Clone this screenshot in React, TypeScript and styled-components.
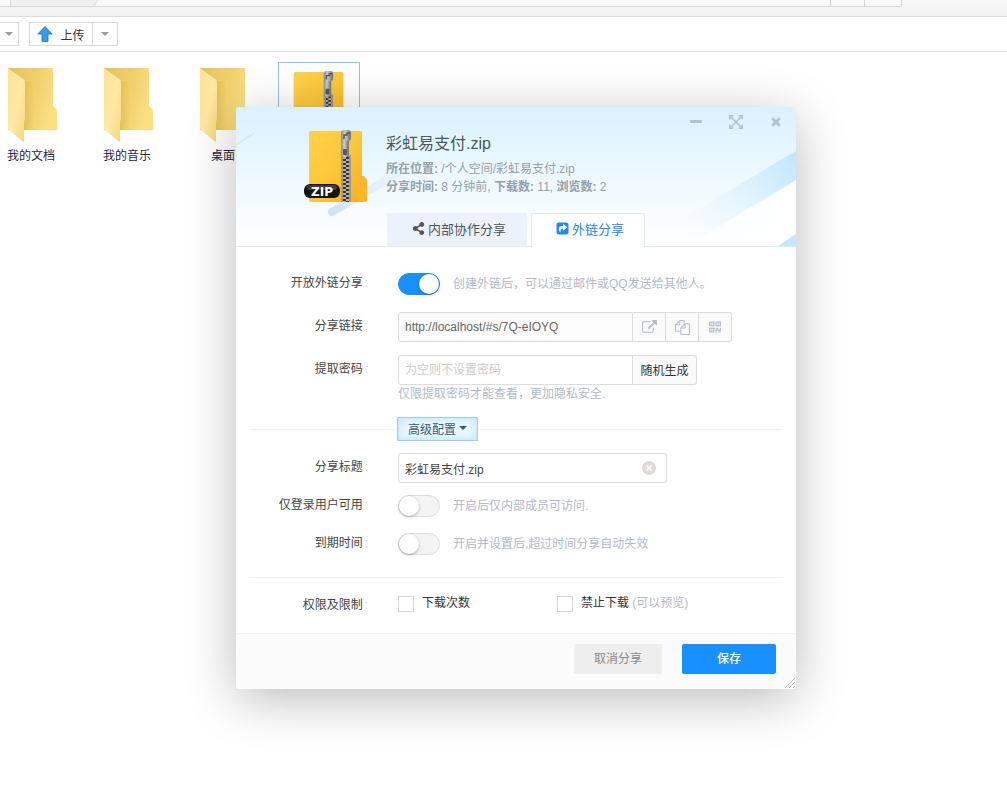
import React from "react";
import styled, { createGlobalStyle, css } from "styled-components";
import { FaShareAlt } from "react-icons/fa";

const GlobalStyle = createGlobalStyle`
  * { box-sizing: border-box; }
  html, body { margin: 0; padding: 0; }
  body {
    background: #fff;
    overflow: hidden;
    font-family: "Liberation Sans", "Noto Sans CJK SC", sans-serif;
    font-size: 12px;
    color: #444;
  }
  button, input { font: inherit; margin: 0; }
`;

/* ---------- file manager behind the dialog ---------- */

const Page = styled.div`
  position: relative;
  min-height: 100vh;
  overflow: hidden;
`;

const AddressBar = styled.header`
  display: flex;
  align-items: flex-start;
  height: 17px;
  background: linear-gradient(#f9f9f9, #f1f1f1);
  border-bottom: 1px solid #dcdcdc;
`;

const AddressPath = styled.div`
  width: 831px;
  height: 7px;
  border-right: 1px solid #d4d4d4;
  border-bottom: 1px solid #d8d8d8;
  background: #fafafa;
  svg { display: block; }
`;

const AddressCell = styled.div<{ $w: number }>`
  width: ${(p) => p.$w}px;
  height: 7px;
  border-right: 1px solid #d4d4d4;
  border-bottom: 1px solid #d8d8d8;
  background: #fafafa;
`;

const Toolbar = styled.nav`
  display: flex;
  align-items: center;
  gap: 10px;
  height: 35px;
  border-bottom: 1px solid #e2e2e2;
`;

const ToolGroup = styled.div<{ $cut?: boolean }>`
  display: flex;
  height: 24px;
  border: 1px solid #d9d9d9;
  ${(p) => p.$cut && css`border-left: 0;`}
`;

const ToolButton = styled.button<{ $w: number }>`
  display: flex;
  align-items: center;
  justify-content: center;
  gap: 7px;
  width: ${(p) => p.$w}px;
  padding: 0;
  border: 0;
  background: #fff;
  color: #333;
  & + & { border-left: 1px solid #d9d9d9; }
`;

const Files = styled.main`
  display: flex;
  gap: 14px;
  margin: 10px 0 0 -10px;
`;

const FileItem = styled.figure<{ $selected?: boolean }>`
  display: flex;
  flex-direction: column;
  align-items: center;
  width: 82px;
  height: 106px;
  margin: 0;
  padding-top: ${(p) => (p.$selected ? 7 : 4)}px;
  border: 1px solid ${(p) => (p.$selected ? "#8fc3e4" : "transparent")};
`;

const FileName = styled.figcaption`
  line-height: 22px;
  color: #1f2440;
`;

/* ---------- dialog ---------- */

const Dialog = styled.section`
  position: absolute;
  top: 107px;
  left: 236px;
  width: 560px;
  background: #fff;
  border-radius: 3px;
  box-shadow: 0 10px 50px rgba(0, 0, 0, 0.27);
`;

const Head = styled.header`
  position: relative;
  padding: 22px 0 0 68px;
  height: 140px;
  border-bottom: 1px solid #dfeaf2;
  border-radius: 3px 3px 0 0;
  background: linear-gradient(#daf1fe, #f3fbff 66%, #fff);
`;

const HeadDecor = styled.svg`
  position: absolute;
  inset: 0;
  width: 100%;
  height: 100%;
`;

const WindowButtons = styled.div`
  position: absolute;
  top: 6px;
  right: 10px;
  display: flex;
  gap: 20px;
`;

const WindowButton = styled.button`
  display: flex;
  align-items: center;
  justify-content: center;
  width: 20px;
  height: 18px;
  padding: 0;
  border: 0;
  background: none;
  color: #adc2cc;
`;

const Summary = styled.div`
  position: relative;
  display: flex;
  gap: 18px;
  width: 400px;
  height: 84px;
`;

const Title = styled.h1`
  margin: 3px 0 4px;
  font-size: 16px;
  line-height: 24px;
  font-weight: 400;
  color: #4b5660;
`;

const Meta = styled.p`
  margin: 0;
  line-height: 18px;
  white-space: nowrap;
  color: #93a1ab;
`;

const Tabs = styled.div`
  position: relative;
  display: flex;
  gap: 4px;
  padding-left: 83px;
`;

const Tab = styled.button<{ $active?: boolean }>`
  display: flex;
  align-items: center;
  justify-content: center;
  gap: 3px;
  width: ${(p) => (p.$active ? 114 : 140)}px;
  height: 34px;
  padding: 0 0 3px 4px;
  font-size: 13px;
  border: 1px solid ${(p) => (p.$active ? "#dfeaf2" : "#ebf2fd")};
  border-bottom-color: ${(p) => (p.$active ? "#fff" : "#dfeaf2")};
  border-radius: 2px 2px 0 0;
  background: ${(p) => (p.$active ? "#fff" : "#ebf2fe")};
  color: ${(p) => (p.$active ? "#2089ee" : "#555")};
`;

const Group = styled.div<{ $gap: number; $top: number; $bottom: number }>`
  display: flex;
  flex-direction: column;
  gap: ${(p) => p.$gap}px;
  padding: ${(p) => p.$top}px 0 ${(p) => p.$bottom}px;
`;

const Row = styled.div`
  display: grid;
  grid-template-columns: 132px 1fr;
  column-gap: 30px;
`;

const labelStyle = css`
  text-align: right;
  color: #444;
  &::after {
    content: ":";
    padding-left: 2px;
    color: #ccc;
  }
`;

const Label = styled.label`
  line-height: 28px;
  ${labelStyle}
`;

const LabelText = styled.span`
  line-height: 32px;
  ${labelStyle}
`;

const Control = styled.div`
  display: flex;
  align-items: center;
  height: 30px;
`;

const Hint = styled.span`
  line-height: 18px;
  color: #b3b9c9;
`;

const Switch = styled.input`
  appearance: none;
  width: 42px;
  height: 22px;
  margin-right: 13px;
  border: 1px solid #ddd;
  border-radius: 11px;
  background: #f4f4f4;
  &::before {
    content: "";
    display: block;
    width: 20px;
    height: 20px;
    border-radius: 50%;
    background: #fff;
    box-shadow: 0 1px 3px rgba(0, 0, 0, 0.3);
  }
  &:checked {
    border-color: #1890ff;
    background: #1890ff;
  }
  &:checked::before { margin-left: 20px; }
`;

const TextInput = styled.input<{ $joined?: boolean }>`
  width: ${(p) => (p.$joined ? 235 : 269)}px;
  height: 30px;
  padding: 0 6px;
  border: 1px solid #dcdcdc;
  border-radius: ${(p) => (p.$joined ? "3px 0 0 3px" : "3px")};
  background: #fff;
  color: #444;
  outline: none;
  &::placeholder { color: #ccc; }
  &:read-only {
    background: #fcfcfc;
    color: #666;
  }
`;

const Addon = styled.button<{ $wide?: boolean }>`
  display: flex;
  align-items: center;
  justify-content: center;
  width: ${(p) => (p.$wide ? 64 : 33)}px;
  height: 30px;
  padding: ${(p) => (p.$wide ? "0 0 2px" : "0")};
  border: 1px solid #dcdcdc;
  border-left: 0;
  background: #fafafa;
  color: ${(p) => (p.$wide ? "#333" : "#b6bdcc")};
  &:last-child { border-radius: 0 3px 3px 0; }
`;

const InputWrap = styled.div`
  position: relative;
`;

const ClearButton = styled.button`
  position: absolute;
  top: 7px;
  right: 10px;
  width: 16px;
  height: 16px;
  padding: 0;
  border: 0;
  background: none;
  svg { display: block; }
`;

const Divider = styled.hr`
  flex: 1;
  height: 1px;
  margin: 0;
  border: 0;
  background: #f2f2f2;
`;

const Fold = styled.div`
  display: grid;
  grid-template-columns: 147px 81px 1fr;
  align-items: center;
  padding: 0 14px;
`;

const FoldButton = styled.button`
  display: flex;
  align-items: center;
  justify-content: center;
  gap: 3px;
  height: 24px;
  padding: 0 0 2px;
  border: 1px solid #9fcde8;
  background: #e8f8ff;
  box-shadow: inset 0 0 8px #b5e0f3;
  color: #3c5a6c;
`;

const Line = styled.div`
  display: flex;
  padding: 0 14px;
`;

const Checks = styled.div`
  display: grid;
  grid-template-columns: 159px 1fr;
  align-items: center;
  height: 30px;
`;

const CheckLabel = styled.label`
  display: flex;
  align-items: center;
  gap: 8px;
  line-height: 18px;
  color: #333;
`;

const CheckText = styled.span`
  padding-bottom: 2px;
`;

const Checkbox = styled.input`
  appearance: none;
  width: 16px;
  height: 16px;
  border: 1px solid #d8d8d8;
  background: #fff;
`;

const Foot = styled.footer`
  position: relative;
  display: flex;
  justify-content: flex-end;
  gap: 20px;
  padding: 10px 20px 15px;
  border-top: 1px solid #f4f4f4;
  border-radius: 0 0 3px 3px;
  background: #fbfbfb;
`;

const FootButton = styled.button<{ $primary?: boolean }>`
  width: ${(p) => (p.$primary ? 94 : 88)}px;
  height: 30px;
  padding: 0 0 3px;
  border: 0;
  border-radius: 2px;
  background: ${(p) => (p.$primary ? "#1890ff" : "#eee")};
  color: ${(p) => (p.$primary ? "#fff" : "#888")};
  font-weight: ${(p) => (p.$primary ? 500 : 400)};
`;

const Grip = styled.svg`
  position: absolute;
  right: 1px;
  bottom: 1px;
`;

/* ---------- drawings ---------- */

const Caret = ({ color = "#999" }: { color?: string }) => (
  <svg width="8" height="4" viewBox="0 0 8 4" aria-hidden="true">
    <path d="M0 0h8L4 4z" fill={color} />
  </svg>
);

const UploadArrow = () => (
  <svg width="16" height="16" viewBox="0 0 16 16" aria-hidden="true">
    <path d="M8 .6 15.2 8H11v7.4H5V8H.8z" fill="#399ae6" stroke="#2478be" strokeWidth=".9" />
  </svg>
);

const Folder = () => (
  <svg width="54" height="78" viewBox="0 0 54 78" aria-hidden="true">
    <defs>
      <linearGradient id="fBack" x1="0" y1="0" x2="1" y2="0.3">
        <stop offset="0" stopColor="#e6c35b" />
        <stop offset="0.6" stopColor="#f1d06c" />
        <stop offset="1" stopColor="#fbdf85" />
      </linearGradient>
      <linearGradient id="fFront" x1="0" y1="0" x2="1" y2="1">
        <stop offset="0" stopColor="#fbe293" />
        <stop offset="0.5" stopColor="#ffe9a5" />
        <stop offset="1" stopColor="#f5d77d" />
      </linearGradient>
      <linearGradient id="fShade" x1="0" y1="0" x2="1" y2="0">
        <stop offset="0" stopColor="#d8b34d" stopOpacity="0.5" />
        <stop offset="1" stopColor="#d8b34d" stopOpacity="0" />
      </linearGradient>
    </defs>
    <path d="M48 61h8l-3 2.500h-8z" fill="#f3efe8" />
    <path d="M4 1h44q1 0 1 1v37l4 4v19q0 1-1 1H4z" fill="url(#fBack)" />
    <path d="M20 14h10v49H20z" fill="url(#fShade)" />
    <path d="M4 1l15 11q2 1 2 3v37l-1 3v19.500q0 1-1 0L5 63q-1-1-1-2z" fill="url(#fFront)" />
  </svg>
);

const ZipIcon = ({ w, badge }: { w: number; badge?: boolean }) => (
  <svg width={w} height={(w * 74) / 64} viewBox="0 0 64 74" aria-hidden="true">
    <defs>
      <linearGradient id="zBody" x1="0" y1="0" x2="1" y2="1">
        <stop offset="0" stopColor="#ffd24a" />
        <stop offset="0.5" stopColor="#fdc73a" />
        <stop offset="1" stopColor="#f7ae24" />
      </linearGradient>
      <linearGradient id="zMetal" x1="0" y1="0" x2="1" y2="0">
        <stop offset="0" stopColor="#888" />
        <stop offset="0.4" stopColor="#ccc" />
        <stop offset="1" stopColor="#6c6c6c" />
      </linearGradient>
      <pattern id="zTeeth" width="6" height="4" patternUnits="userSpaceOnUse">
        <rect width="6" height="4" fill="#b9b2a4" />
        <rect width="3" height="2" fill="#39352e" />
        <rect x="3" y="2" width="3" height="2" fill="#39352e" />
      </pattern>
    </defs>
    <rect x="5" y="2" width="53" height="71" rx="2" fill="url(#zBody)" />
    <path d="M54 73V51l3-4h3l3 4v20q0 2-2 2z" fill="#fdb62c" />
    <rect x="37" y="26" width="10" height="47" fill="#a09a8a" />
    <rect x="39" y="28" width="6" height="45" fill="url(#zTeeth)" />
    <rect x="37" y="10" width="8" height="18" rx="1" fill="url(#zMetal)" />
    <rect x="39" y="20" width="4" height="6" rx="1" fill="#55585a" />
    <rect x="37" y="1" width="10" height="11" rx="3" fill="url(#zMetal)" />
    <path d="M40 10V6h3V4h3" stroke="#55595c" strokeWidth="1.500" fill="none" />
    {badge && (
      <>
        <rect x="0" y="55" width="36" height="14" rx="6" fill="#151515" />
        <rect x="3" y="56" width="30" height="5" rx="2" fill="#3c3c3c" />
        <text
          x="18"
          y="67"
          textAnchor="middle"
          fontFamily="DejaVu Sans, sans-serif"
          fontWeight="700"
          fontSize="12"
          fill="#fff"
        >
          ZIP
        </text>
      </>
    )}
  </svg>
);

const Expand = () => (
  <svg width="14" height="14" viewBox="0 0 14 14" fill="none" stroke="currentColor" aria-hidden="true">
    <path d="M1.500 1.500l11 11M12.500 1.500l-11 11" strokeWidth="1.500" />
    <path d="M.8 4.500V.8h3.700M9.500.8h3.700v3.700M13.200 9.500v3.700H9.500M4.500 13.200H.8V9.500" strokeWidth="1.500" />
  </svg>
);

const ShareSquare = () => (
  <svg width="13" height="13" viewBox="0 0 13 13" aria-hidden="true">
    <rect x=".5" y=".5" width="12" height="12" rx="2.500" fill="#2089ee" />
    <path d="M7.300 1.800 11.300 5.300 7.300 8.800V6.900C5.200 6.700 4.200 7.600 4.500 10.500 1.300 7.500 2.600 3.800 7.300 3.800z" fill="#fff" />
  </svg>
);

const OpenLink = () => (
  <svg width="15" height="15" viewBox="0 0 1792 1792" fill="currentColor" aria-hidden="true">
    <path d="M1408 928v320q0 119-84.500 203.500t-203.500 84.500h-832q-119 0-203.500-84.500t-84.500-203.500v-832q0-119 84.500-203.500t203.500-84.500h704q14 0 23 9t9 23v64q0 14-9 23t-23 9h-704q-66 0-113 47t-47 113v832q0 66 47 113t113 47h832q66 0 113-47t47-113v-320q0-14 9-23t23-9h64q14 0 23 9t9 23zm384-864v512q0 26-19 45t-45 19-45-19l-176-176-652 652q-10 10-23 10t-23-10l-114-114q-10-10-10-23t10-23l652-652-176-176q-19-19-19-45t19-45 45-19h512q26 0 45 19t19 45z" />
  </svg>
);

const CopyFiles = () => (
  <svg width="15" height="15" viewBox="0 0 1792 1792" fill="currentColor" aria-hidden="true">
    <path d="M1696 384q40 0 68 28t28 68v1216q0 40-28 68t-68 28h-960q-40 0-68-28t-28-68v-288h-544q-40 0-68-28t-28-68v-672q0-40 20-88t48-76l408-408q28-28 76-48t88-20h416q40 0 68 28t28 68v328q68-40 128-40h416zm-544 213l-299 299h299v-299zm-640-384l-299 299h299v-299zm196 647l316-316v-416h-384v416q0 40-28 68t-68 28h-416v640h512v-256q0-40 20-88t48-76zm956 804v-1152h-384v416q0 40-28 68t-68 28h-416v640h896z" />
  </svg>
);

const QrCode = () => (
  <svg width="12" height="12" viewBox="0 0 12 12" fill="none" stroke="currentColor" strokeWidth="1.200" aria-hidden="true">
    <path d="M.6 1.100h4.300v3.500H.6zM7.100 1.100h4.300v3.500H7.100zM.6 7.400h4.300v3.500H.6zM2 2.900h1.500M8.500 2.900H10M2 9.200h1.500M6.500 7.400h2.300v2h2.600V6.800M7.100 7v4.500M9 11h2.800" />
  </svg>
);

/* ---------- page ---------- */

export default function App() {
  return (
    <>
      <GlobalStyle />
      <Page>
        <AddressBar>
          <AddressPath>
            <svg width="100" height="6" viewBox="0 0 100 6" aria-hidden="true">
              <path d="M10 0h88l-4 6H10z" fill="#f0f0f0" />
              <path d="M10.500 0v6M98 0l-4 6" stroke="#d8d8d8" fill="none" />
            </svg>
          </AddressPath>
          <AddressCell $w={34} />
          <AddressCell $w={37} />
        </AddressBar>
        <Toolbar>
          <ToolGroup $cut>
            <ToolButton $w={18} aria-label="更多">
              <Caret />
            </ToolButton>
          </ToolGroup>
          <ToolGroup>
            <ToolButton $w={62}>
              <UploadArrow />
              上传
            </ToolButton>
            <ToolButton $w={25} aria-label="上传选项">
              <Caret />
            </ToolButton>
          </ToolGroup>
        </Toolbar>
        <Files>
          {["我的文档", "我的音乐", "桌面"].map((name) => (
            <FileItem key={name}>
              <Folder />
              <FileName>{name}</FileName>
            </FileItem>
          ))}
          <FileItem $selected>
            <ZipIcon w={60} />
          </FileItem>
        </Files>

        <Dialog role="dialog" aria-labelledby="dialog-title">
          <Head>
            <HeadDecor viewBox="0 0 560 139" preserveAspectRatio="none" aria-hidden="true">
              <defs>
                <linearGradient id="band" gradientUnits="userSpaceOnUse" x1="560" y1="58" x2="445" y2="127">
                  <stop offset="0" stopColor="#c3e8fd" />
                  <stop offset="1" stopColor="#eaf7ff" stopOpacity="0" />
                </linearGradient>
                <linearGradient id="streak" gradientUnits="userSpaceOnUse" x1="94" y1="106" x2="190" y2="50">
                  <stop offset="0" stopColor="#cfe1fb" />
                  <stop offset="1" stopColor="#dff0fe" stopOpacity="0" />
                </linearGradient>
                <linearGradient id="whiteBand" gradientUnits="userSpaceOnUse" x1="560" y1="100" x2="450" y2="139">
                  <stop offset="0" stopColor="#fff" />
                  <stop offset="1" stopColor="#fff" stopOpacity="0" />
                </linearGradient>
              </defs>
              <path d="M560 73v55l-18 11H450z" fill="url(#whiteBand)" />
              <path d="M560 44v29L450 139l-10-24z" fill="url(#band)" />
              <path d="M560 127v12h-18z" fill="#c3e8fd" />
              <path d="M96 105 190 50" stroke="url(#streak)" strokeWidth="8" strokeLinecap="round" />
              <path d="M0 38 18 26" stroke="#d3ecfb" strokeWidth="2" />
            </HeadDecor>
            <Summary>
              <ZipIcon w={64} badge />
              <div>
                <Title id="dialog-title">彩虹易支付.zip</Title>
                <Meta>
                  <b>所在位置:</b> /个人空间/彩虹易支付.zip
                </Meta>
                <Meta>
                  <b>分享时间:</b> 8 分钟前, <b>下载数:</b> 11, <b>浏览数:</b> 2
                </Meta>
              </div>
            </Summary>
            <Tabs role="tablist">
              <Tab role="tab" aria-selected={false}>
                <FaShareAlt size={13} />
                内部协作分享
              </Tab>
              <Tab role="tab" aria-selected $active>
                <ShareSquare />
                外链分享
              </Tab>
            </Tabs>
            <WindowButtons>
              <WindowButton aria-label="最小化">
                <svg width="12" height="4" viewBox="0 0 12 4" aria-hidden="true">
                  <rect width="12" height="3" rx="1" fill="currentColor" />
                </svg>
              </WindowButton>
              <WindowButton aria-label="最大化">
                <Expand />
              </WindowButton>
              <WindowButton aria-label="关闭">
                <svg width="10" height="10" viewBox="0 0 10 10" aria-hidden="true">
                  <path d="M1.200 1.200l7.600 7.600M8.800 1.200L1.200 8.800" stroke="currentColor" strokeWidth="2.800" />
                </svg>
              </WindowButton>
            </WindowButtons>
          </Head>

          <Group $gap={13} $top={22} $bottom={14}>
            <Row>
              <Label htmlFor="share-on">开放外链分享</Label>
              <Control>
                <Switch id="share-on" type="checkbox" role="switch" defaultChecked />
                <Hint>创建外链后，可以通过邮件或QQ发送给其他人。</Hint>
              </Control>
            </Row>
            <Row>
              <Label htmlFor="share-link">分享链接</Label>
              <Control>
                <TextInput id="share-link" $joined readOnly value="http://localhost/#s/7Q-eIOYQ" />
                <Addon aria-label="打开链接"><OpenLink /></Addon>
                <Addon aria-label="复制链接"><CopyFiles /></Addon>
                <Addon aria-label="二维码"><QrCode /></Addon>
              </Control>
            </Row>
            <Row>
              <Label htmlFor="share-code">提取密码</Label>
              <div>
                <Control>
                  <TextInput id="share-code" $joined placeholder="为空则不设置密码" />
                  <Addon $wide>随机生成</Addon>
                </Control>
                <Hint as="div">仅限提取密码才能查看，更加隐私安全.</Hint>
              </div>
            </Row>
          </Group>

          <Fold>
            <Divider />
            <FoldButton aria-expanded>
              高级配置
              <Caret color="#3c5a6c" />
            </FoldButton>
            <Divider />
          </Fold>

          <Group $gap={8} $top={12} $bottom={18}>
            <Row>
              <Label htmlFor="share-title">分享标题</Label>
              <Control>
                <InputWrap>
                  <TextInput id="share-title" defaultValue="彩虹易支付.zip" />
                  <ClearButton aria-label="清除">
                    <svg width="16" height="16" viewBox="0 0 16 16" aria-hidden="true">
                      <circle cx="8" cy="8" r="7" fill="#e3d9d7" />
                      <path d="M5.500 5.500l5 5M10.500 5.500l-5 5" stroke="#fff" strokeWidth="1.500" />
                    </svg>
                  </ClearButton>
                </InputWrap>
              </Control>
            </Row>
            <Row>
              <Label htmlFor="share-login">仅登录用户可用</Label>
              <Control>
                <Switch id="share-login" type="checkbox" role="switch" />
                <Hint>开启后仅内部成员可访问.</Hint>
              </Control>
            </Row>
            <Row>
              <Label htmlFor="share-expire">到期时间</Label>
              <Control>
                <Switch id="share-expire" type="checkbox" role="switch" />
                <Hint>开启并设置后,超过时间分享自动失效</Hint>
              </Control>
            </Row>
          </Group>

          <Line>
            <Divider />
          </Line>

          <Group $gap={8} $top={11} $bottom={12}>
            <Row>
              <LabelText>权限及限制</LabelText>
              <Checks>
                <CheckLabel>
                  <Checkbox type="checkbox" />
                  <CheckText>下载次数</CheckText>
                </CheckLabel>
                <CheckLabel>
                  <Checkbox type="checkbox" />
                  <CheckText>
                    禁止下载 <Hint>(可以预览)</Hint>
                  </CheckText>
                </CheckLabel>
              </Checks>
            </Row>
          </Group>

          <Foot>
            <FootButton>取消分享</FootButton>
            <FootButton $primary>保存</FootButton>
            <Grip width="10" height="10" viewBox="0 0 10 10" aria-hidden="true">
              <path d="M0 10 10 0M4 10l6-6M8 10l2-2" stroke="#b5b5b5" fill="none" />
            </Grip>
          </Foot>
        </Dialog>
      </Page>
    </>
  );
}
